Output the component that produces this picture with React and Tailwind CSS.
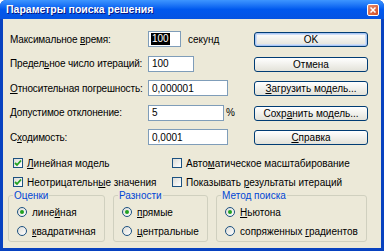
import React from "react";

const font = { fontFamily: '"Liberation Sans", Arial, sans-serif' };

function U({ children }) {
  return <span className="underline underline-offset-[1px]">{children}</span>;
}

function Field({ label, width, value, selected, suffix }) {
  return (
    <div className="flex items-center h-[16px]">
      <div className="w-[138px] shrink-0 tracking-[-0.15px]">{label}</div>
      <div
        className={`h-[16px] border border-[#7F9DB9] bg-white flex items-center px-[2px] ${width}`}
      >
        {selected ? (
          <span className="bg-black text-white px-[1px] leading-[12px]">{value}</span>
        ) : (
          <span className="px-[1px]">{value}</span>
        )}
      </div>
      {suffix}
    </div>
  );
}

function Button({ children, primary }) {
  return (
    <div
      className={`h-[15px] w-[114px] rounded-[3px] border border-[#003C74] bg-gradient-to-b from-white to-[#E3E2D9] flex items-center justify-center ${
        primary ? "shadow-[inset_0_0_0_1px_#A9C6F4,inset_0_0_0_2px_#CEDDF6]" : ""
      }`}
    >
      {children}
    </div>
  );
}

function Check({ checked, children }) {
  return (
    <div className="flex items-center gap-[4px] h-[12px]">
      <div className="w-[10px] h-[10px] border border-[#1C5180] bg-gradient-to-br from-[#DCDCD7] to-white flex items-center justify-center">
        {checked && (
          <svg width="8" height="8" viewBox="0 0 8 8">
            <path d="M1 4 L3 6 L7 1.5" fill="none" stroke="#21A121" strokeWidth="1.8" />
          </svg>
        )}
      </div>
      <span>{children}</span>
    </div>
  );
}

function Radio({ checked, children }) {
  return (
    <div className="flex items-center gap-[5px] h-[12px]">
      <div className="w-[10px] h-[10px] rounded-full border border-[#1C5180] bg-gradient-to-br from-[#DCDCD7] to-white flex items-center justify-center">
        {checked && <div className="w-[4px] h-[4px] rounded-full bg-[#21A121]" />}
      </div>
      <span>{children}</span>
    </div>
  );
}

function Group({ title, className, children }) {
  return (
    <fieldset className={`border border-[#D0D0BF] rounded-[3px] px-[8px] pt-[5px] pb-[4px] ${className}`}>
      <legend className="text-[#0046D5] px-[1px] ml-[-4px] leading-[11px]">{title}</legend>
      <div className="flex flex-col gap-[7px]">{children}</div>
    </fieldset>
  );
}

export default function App() {
  return (
    <div
      className="w-[384px] h-[251px] bg-[#0842C0] rounded-t-[6px] flex flex-col text-[10px] text-black"
      style={font}
    >
      <div className="h-[19px] shrink-0 rounded-t-[6px] bg-gradient-to-b from-[#3D95FF] via-[#0058EE] to-[#0553E2] flex items-center justify-between pl-[6px] pr-[5px]">
        <span className="text-white font-bold text-[10.5px] [text-shadow:1px_1px_0_#0A1883]">
          Параметры поиска решения
        </span>
        <div className="w-[12px] h-[12px] rounded-[2px] border border-white bg-gradient-to-br from-[#E88B6C] to-[#D24A1C] flex items-center justify-center">
          <svg width="6" height="6" viewBox="0 0 6 6">
            <path d="M0.5 0.5 L5.5 5.5 M5.5 0.5 L0.5 5.5" stroke="white" strokeWidth="1.5" />
          </svg>
        </div>
      </div>
      <div className="flex-1 mx-[3px] mb-[3px] bg-[#ECE9D8] flex flex-col px-[7px] pt-[12px]">
        <div className="flex">
          <div className="flex flex-col gap-[8.5px] w-[244px]">
            <Field label={<>Максимальное <U>в</U>ремя:</>} width="w-[33px]" value="100" selected
              suffix={<span className="ml-[7px]">секунд</span>} />
            <Field label={<>Предел<U>ь</U>ное число итераций:</>} width="w-[46px]" value="100" />
            <Field label={<><U>О</U>тносительная погрешность:</>} width="w-[80px]" value="0,000001" />
            <Field label={<><U>Д</U>опустимое отклонение:</>} width="w-[76px]" value="5"
              suffix={<span className="ml-[2px]">%</span>} />
            <Field label={<>С<U>х</U>одимость:</>} width="w-[80px]" value="0,0001" />
          </div>
          <div className="flex flex-col gap-[9.5px] pt-[1px]">
            <Button primary>OK</Button>
            <Button>Отмена</Button>
            <Button><U>З</U>агрузить модель...</Button>
            <Button>Сохр<U>а</U>нить модель...</Button>
            <Button><U>С</U>правка</Button>
          </div>
        </div>
        <div className="grid grid-cols-[159px_1fr] gap-y-[7px] mt-[12px] pl-[3px]">
          <Check checked><U>Л</U>инейная модель</Check>
          <Check>Авто<U>м</U>атическое масштабирование</Check>
          <Check checked>Неотрицательн<U>ы</U>е значения</Check>
          <Check>Показывать <U>р</U>езультаты итераций</Check>
        </div>
        <div className="flex gap-[8px] mt-[2px] ml-[-2px]">
          <Group title="Оценки" className="w-[97px]">
            <Radio checked>лине<U>й</U>ная</Radio>
            <Radio><U>к</U>вадратичная</Radio>
          </Group>
          <Group title="Разности" className="w-[95px]">
            <Radio checked><U>п</U>рямые</Radio>
            <Radio><U>ц</U>ентральные</Radio>
          </Group>
          <Group title="Метод поиска" className="w-[151px]">
            <Radio checked><U>Н</U>ьютона</Radio>
            <Radio>сопряженных <U>г</U>радиентов</Radio>
          </Group>
        </div>
      </div>
    </div>
  );
}
